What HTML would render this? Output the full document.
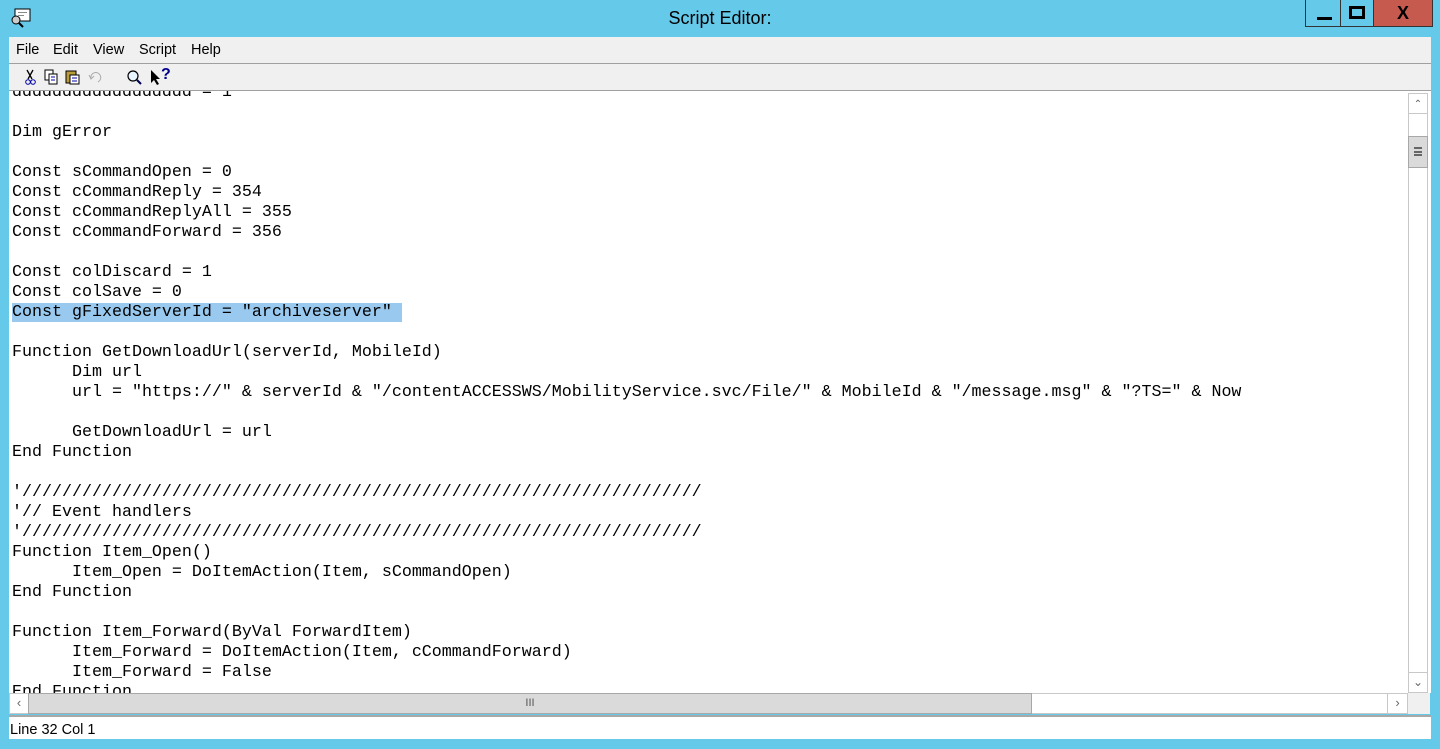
<!DOCTYPE html>
<html><head><style>
*{margin:0;padding:0;box-sizing:border-box}
body{width:1440px;height:749px;background:#65c9ea;position:relative;overflow:hidden;font-family:"Liberation Sans",sans-serif}
.abs{position:absolute}
#title{left:0;top:8px;width:1440px;text-align:center;font-size:18px;color:#000}
#menu{left:9px;top:37px;width:1422px;height:27px;background:#f0f0f0;border-bottom:1px solid #a0a0a0;font-size:14.5px}
#menu span{position:absolute;top:5px}
#tool{left:9px;top:64px;width:1422px;height:27px;background:#f0f0f0;border-bottom:1px solid #a0a0a0}
#ed{left:9px;top:91px;width:1422px;height:602px;background:#fff;overflow:hidden}
pre{position:absolute;left:3px;top:-8px;font-family:"Liberation Mono",monospace;font-size:16.67px;line-height:20px;color:#000}
.hl{background:#99c9ef}
#vs{left:1408px;top:93px;width:20px;height:600px;background:#fff;border:1px solid #c8c8c8}
#hs{left:9px;top:693px;width:1399px;height:21px;background:#fff;border:1px solid #c8c8c8}
#status{left:9px;top:715px;width:1422px;height:24px;background:#fff;border-top:2px solid #a8a8a8;font-size:14.5px}
</style></head><body>
<svg class="abs" style="left:10px;top:8px" width="22" height="20" viewBox="0 0 22 20"><rect x="5" y="1" width="15" height="12" fill="#fff" stroke="#000"/><rect x="8" y="4" width="9" height="1" fill="#888"/><rect x="8" y="7" width="6" height="1" fill="#888"/><circle cx="6" cy="12" r="4" fill="#ccc" stroke="#000"/><path d="M9 15 L13 19" stroke="#000" stroke-width="2"/></svg>
<div id="title" class="abs">Script Editor:</div>
<div class="abs" style="left:1305px;top:0;width:35px;height:27px;border:1px solid #333;border-top:none;border-right:none"><div class="abs" style="left:11px;top:17px;width:15px;height:3px;background:#000"></div></div>
<div class="abs" style="left:1340px;top:0;width:34px;height:27px;border:1px solid #333;border-top:none;border-right:none"><div class="abs" style="left:8px;top:6px;width:16px;height:13px;border:3px solid #000"></div></div>
<div class="abs" style="left:1373px;top:0;width:60px;height:27px;background:#c75a4f;border:1px solid #333;border-top:none;text-align:center;font-weight:bold;font-size:18px;line-height:26px">X</div>
<div id="menu" class="abs"><span style="left:7px">File</span><span style="left:44px">Edit</span><span style="left:84px">View</span><span style="left:130px">Script</span><span style="left:182px">Help</span></div>
<div id="tool" class="abs">
<svg class="abs" style="left:14px;top:4px" width="140" height="18" viewBox="0 0 140 18">
<path d="M4 2 L9 11 M10 2 L5 11" stroke="#000" stroke-width="1.3" fill="none"/><circle cx="5" cy="14" r="2.3" stroke="#00a" fill="none"/><circle cx="10" cy="14" r="2.3" stroke="#00a" fill="none"/>
<rect x="22" y="2" width="8" height="10" fill="#fff" stroke="#000"/><rect x="26" y="6" width="8" height="10" fill="#fff" stroke="#000"/><path d="M28 9h4M28 12h4" stroke="#00a"/>
<rect x="43" y="3" width="10" height="12" fill="#b89b3a" stroke="#000"/><rect x="47" y="7" width="9" height="9" fill="#fff" stroke="#000"/><path d="M49 10h5M49 13h5" stroke="#00a"/>
<path d="M68 11 a5 5 0 1 1 7 3 M66 7 l2 4 l3 -3" stroke="#aaa" fill="none"/>
<circle cx="110" cy="8" r="5" fill="#eaf6ff" stroke="#000" stroke-width="1.2"/><path d="M114 12 l4 4" stroke="#005" stroke-width="2"/>
<path d="M128 2 L128 15 L131 12 L134 17 L136 16 L133 11 L137 11 Z" fill="#000"/>
</svg>
<div class="abs" style="left:152px;top:2px;font-weight:bold;font-size:16px;color:#00008b">?</div>
</div>
<div id="ed" class="abs"><pre>dddddddddddddddddd = 1

Dim gError

Const sCommandOpen = 0
Const cCommandReply = 354
Const cCommandReplyAll = 355
Const cCommandForward = 356

Const colDiscard = 1
Const colSave = 0
<span class="hl">Const gFixedServerId = "archiveserver" </span>

Function GetDownloadUrl(serverId, MobileId)
      Dim url
      url = "https://" &amp; serverId &amp; "/contentACCESSWS/MobilityService.svc/File/" &amp; MobileId &amp; "/message.msg" &amp; "?TS=" &amp; Now

      GetDownloadUrl = url
End Function

'////////////////////////////////////////////////////////////////////
'// Event handlers
'////////////////////////////////////////////////////////////////////
Function Item_Open()
      Item_Open = DoItemAction(Item, sCommandOpen)
End Function

Function Item_Forward(ByVal ForwardItem)
      Item_Forward = DoItemAction(Item, cCommandForward)
      Item_Forward = False
End Function</pre></div>
<div id="vs" class="abs">
<div class="abs" style="left:0;top:0;width:18px;height:20px;border-bottom:1px solid #c8c8c8;text-align:center;font-size:10px;color:#666;line-height:22px">&#8963;</div>
<div class="abs" style="left:-1px;top:42px;width:20px;height:32px;background:#dadada;border:1px solid #a8a8a8"><div class="abs" style="left:5px;top:10px;width:8px;height:9px;border-top:2px solid #666;border-bottom:2px solid #666"></div><div class="abs" style="left:5px;top:14px;width:8px;height:2px;background:#666"></div></div>
<div class="abs" style="left:0;top:578px;width:18px;height:20px;border-top:1px solid #c8c8c8;text-align:center;font-size:12px;color:#666;line-height:18px">&#8964;</div>
</div>
<div id="hs" class="abs">
<div class="abs" style="left:0;top:0;width:18px;height:19px;text-align:center;color:#666;font-size:13px;line-height:18px">&lsaquo;</div>
<div class="abs" style="left:18px;top:-1px;width:1004px;height:21px;background:#dadada;border:1px solid #a8a8a8;text-align:center;font-size:11px;color:#555;line-height:19px">III</div>
<div class="abs" style="left:1377px;top:0;width:20px;height:19px;border-left:1px solid #c8c8c8;text-align:center;color:#666;font-size:13px;line-height:18px">&rsaquo;</div>
</div>
<div class="abs" style="left:1408px;top:693px;width:22px;height:21px;background:#f0f0f0"></div>
<div id="status" class="abs"><span class="abs" style="left:1px;top:5px">Line 32 Col 1</span></div>
</body></html>
